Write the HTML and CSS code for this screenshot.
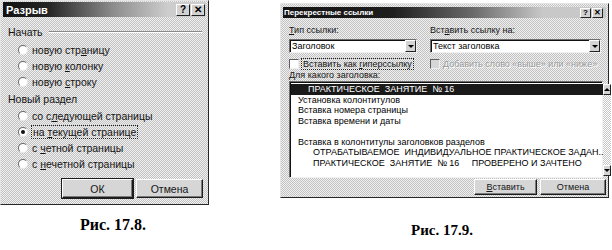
FILE: index.html
```html
<!DOCTYPE html>
<html lang="ru">
<head>
    <meta charset="UTF-8">
    <title>Разрыв и Перекрестные ссылки</title>
    <link rel="stylesheet" href="styles.css">
</head>
<body>
    <div class="figure fig-break">
        <div class="dialog break-dialog">
            <div class="titlebar">
                <span class="title">Разрыв</span>
                <span class="title-btns"><span class="tbtn">?</span><span class="tbtn">✕</span></span>
            </div>

            <div class="group-head"><span>Начать</span><span class="rule"></span></div>
            <div class="radio-list first">
                <div class="radio"><span class="dot"></span><span>новую стр<u>а</u>ницу</span></div>
                <div class="radio"><span class="dot"></span><span>новую <u>к</u>олонку</span></div>
                <div class="radio"><span class="dot"></span><span>новую <u>с</u>троку</span></div>
            </div>

            <div class="group-head second"><span>Новый раздел</span></div>
            <div class="radio-list">
                <div class="radio"><span class="dot"></span><span>со с<u>л</u>едующей страницы</span></div>
                <div class="radio"><span class="dot checked"></span><span class="focus">на <u>т</u>екущей странице</span></div>
                <div class="radio"><span class="dot"></span><span>с <u>ч</u>етной страницы</span></div>
                <div class="radio"><span class="dot"></span><span>с <u>н</u>ечетной страницы</span></div>
            </div>

            <div class="buttons">
                <span class="btn default ok">ОК</span>
                <span class="btn cancel">Отмена</span>
            </div>
        </div>
        <p class="caption">Рис. 17.8.</p>
    </div>

    <div class="figure fig-cross">
        <div class="dialog cross-dialog">
            <div class="titlebar">
                <span class="title">Перекрестные ссылки</span>
                <span class="title-btns"><span class="tbtn">?</span><span class="tbtn">✕</span></span>
            </div>

            <div class="cross-form">
                <div class="field-label"><u>Т</u>ип ссылки:</div>
                <div class="field-label">Вст<u>а</u>вить ссылку на:</div>

                <div class="combo"><span class="combo-text">Заголовок</span><span class="combo-arrow"></span></div>
                <div class="combo"><span class="combo-text">Текст заголовка</span><span class="combo-arrow"></span></div>

                <div class="check"><span class="box"></span><span class="focus">Вставить как <u>г</u>иперссылку</span></div>
                <div class="check disabled"><span class="box"></span><span>Добавить слово «выше» или «ниже»</span></div>
            </div>

            <div class="field-label list-label"><u>Д</u>ля какого заголовка:</div>
            <div class="listbox">
                <div class="list-rows">
                    <div class="row selected">ПРАКТИЧЕСКОЕ  ЗАНЯТИЕ  № 16</div>
                    <div class="row">Установка колонтитулов</div>
                    <div class="row">Вставка номера страницы</div>
                    <div class="row">Вставка времени и даты</div>
                    <div class="row"></div>
                    <div class="row">Вставка в колонтитулы заголовков разделов</div>
                    <div class="row sub">ОТРАБАТЫВАЕМОЕ  ИНДИВИДУАЛЬНОЕ ПРАКТИЧЕСКОЕ ЗАДАН..</div>
                    <div class="row sub">ПРАКТИЧЕСКОЕ  ЗАНЯТИЕ  № 16     ПРОВЕРЕНО И ЗАЧТЕНО</div>
                </div>
                <div class="scrollbar">
                    <span class="sb-btn up"></span>
                    <span class="sb-track"></span>
                    <span class="sb-btn down"></span>
                </div>
            </div>

            <div class="buttons">
                <span class="btn insert"><span><u>В</u>ставить</span></span>
                <span class="btn cancel">Отмена</span>
            </div>
        </div>
        <p class="caption">Рис. 17.9.</p>
    </div>
</body>
</html>
```

FILE: styles.css
```css
body {
    margin: 0;
    background: #fff;
    display: flex;
    align-items: flex-start;
    font-family: "Liberation Sans", Arial, sans-serif;
    color: #151515;
}
.figure {
    flex: none;
}
.fig-break {
    width: 209px;
}
.fig-cross {
    width: 329px;
    margin-left: 71px;
    padding-top: 3px;
}

/* common window look */
.dialog {
    box-sizing: border-box;
    border: 1px solid;
    border-color: #e4e4e4 #262626 #262626 #e4e4e4;
    background: repeating-conic-gradient(#c2c2c2 0 25%, #f0f0f0 0 50%) 0 0 / 2px 2px;
}
.titlebar {
    display: flex;
    align-items: center;
    justify-content: space-between;
    color: #fff;
    font-weight: bold;
}
.title-btns {
    display: flex;
    gap: 1px;
}
.tbtn {
    box-sizing: border-box;
    display: flex;
    align-items: center;
    justify-content: center;
    background: #d2d2d2;
    color: #000;
    border: 1px solid;
    border-color: #fff #222 #222 #fff;
    font-weight: bold;
}
.btn {
    box-sizing: border-box;
    display: flex;
    align-items: center;
    justify-content: center;
    background: #d6d6d6;
    border: 1px solid;
    border-color: #fff #1c1c1c #1c1c1c #fff;
    box-shadow: inset -1px -1px 0 #7a7a7a;
}
.btn.default {
    outline: 1px solid #1c1c1c;
}
.buttons {
    display: flex;
    justify-content: flex-end;
}
.focus {
    outline: 1px dotted #222;
    outline-offset: 0;
    padding: 0 1px;
}
u {
    text-decoration-thickness: 1px;
    text-underline-offset: 1px;
}

/* Разрыв */
.break-dialog {
    height: 205px;
    padding: 1px 2px 0;
    font-size: 10.5px;
}
.break-dialog .titlebar {
    height: 15px;
    padding-left: 3px;
    font-size: 11px;
    background: linear-gradient(to right, #121212 0, #242424 45px, #8c8c8c 110px, #cdcdcd 165px);
}
.break-dialog .title-btns {
    margin-right: 1px;
}
.break-dialog .tbtn {
    width: 14px;
    height: 12px;
    font-size: 10px;
}
.group-head {
    display: flex;
    align-items: center;
    gap: 6px;
    height: 14px;
    margin: 8px 4px 0 5px;
}
.group-head.second {
    margin-top: 2px;
}
.rule {
    flex: 1;
    border-top: 1px solid #8a8a8a;
    border-bottom: 1px solid #fff;
}
.radio-list {
    padding-top: 2px;
}
.radio-list.first {
    padding-top: 3px;
}
.radio {
    display: flex;
    align-items: center;
    height: 16px;
    padding-left: 15px;
}
.dot {
    box-sizing: border-box;
    position: relative;
    width: 10px;
    height: 10px;
    margin-right: 4px;
    border-radius: 50%;
    background: #fff;
    border: 1px solid;
    border-color: #6a6a6a #e8e8e8 #e8e8e8 #6a6a6a;
}
.dot.checked::after {
    content: "";
    position: absolute;
    left: 2px;
    top: 2px;
    width: 4px;
    height: 4px;
    border-radius: 50%;
    background: #111;
}
.break-dialog .buttons {
    margin: 7px 3px 0 0;
    gap: 3px;
}
.break-dialog .btn {
    height: 19px;
}
.break-dialog .ok {
    width: 71px;
}
.break-dialog .cancel {
    width: 67px;
}

/* Перекрестные ссылки */
.cross-dialog {
    height: 195px;
    padding: 3px 2px 0;
    font-size: 9px;
}
.cross-dialog .titlebar {
    height: 11px;
    padding-left: 1px;
    font-size: 8px;
    background: linear-gradient(to right, #141414 0, #1e1e1e 110px, #6a6a6a 190px, #c8c8c8 260px);
}
.cross-dialog .title-btns {
    margin-right: 3px;
}
.cross-dialog .tbtn {
    width: 11px;
    height: 10px;
    font-size: 8px;
}
.cross-form {
    display: grid;
    grid-template-columns: 128px 171px;
    column-gap: 13px;
    margin: 7px 0 0 6px;
}
.field-label {
    height: 10px;
    line-height: 10px;
}
.list-label {
    margin-left: 6px;
}
.combo {
    box-sizing: border-box;
    display: flex;
    align-items: center;
    height: 14px;
    margin-top: 4px;
    background: #fff;
    border: 1px solid;
    border-color: #6e6e6e #f0f0f0 #f0f0f0 #6e6e6e;
    box-shadow: inset 1px 1px 0 #111;
}
.combo-text {
    flex: 1;
    padding-left: 2px;
    color: #000;
}
.combo-arrow {
    box-sizing: border-box;
    display: flex;
    align-items: center;
    justify-content: center;
    width: 11px;
    height: 12px;
    background: #d4d4d4;
    border: 1px solid;
    border-color: #fff #222 #222 #fff;
}
.combo-arrow::after {
    content: "";
    border-left: 3px solid transparent;
    border-right: 3px solid transparent;
    border-top: 3px solid #000;
}
.check {
    display: flex;
    align-items: center;
    height: 12px;
    margin-top: 5px;
}
.box {
    box-sizing: border-box;
    width: 10px;
    height: 10px;
    margin-right: 3px;
    background: #fff;
    border: 1px solid;
    border-color: #5e5e5e #eee #eee #5e5e5e;
}
.check.disabled {
    color: #9a9a9a;
    text-shadow: 1px 1px 0 #fff;
}
.check.disabled .box {
    background: #d6d6d6;
}
.listbox {
    box-sizing: border-box;
    display: flex;
    width: 314px;
    height: 97px;
    margin: 1px 0 0 6px;
    background: #fff;
    border: 1px solid;
    border-color: #6e6e6e #f0f0f0 #f0f0f0 #6e6e6e;
    box-shadow: inset 1px 1px 0 #111;
}
.list-rows {
    flex: 1;
    padding-top: 2px;
    padding-left: 1px;
    color: #000;
}
.row {
    height: 10.5px;
    line-height: 10.5px;
    padding-left: 7px;
    white-space: pre;
}
.row.selected {
    background: #1a1a1a;
    color: #fff;
    padding-left: 17px;
}
.row.sub {
    padding-left: 22px;
}
.scrollbar {
    display: flex;
    flex-direction: column;
    width: 11px;
    padding: 2px 1px 1px 0;
}
.sb-track {
    flex: 1;
    background: repeating-conic-gradient(#c6c6c6 0 25%, #fff 0 50%) 0 0 / 2px 2px;
}
.sb-btn {
    box-sizing: border-box;
    display: flex;
    align-items: center;
    justify-content: center;
    height: 11px;
    background: #d4d4d4;
    border: 1px solid;
    border-color: #fff #222 #222 #fff;
}
.sb-btn.up::after {
    content: "";
    border-left: 3px solid transparent;
    border-right: 3px solid transparent;
    border-bottom: 3px solid #000;
}
.sb-btn.down::after {
    content: "";
    border-left: 3px solid transparent;
    border-right: 3px solid transparent;
    border-top: 3px solid #000;
}
.cross-dialog .buttons {
    margin: 1px 0 0;
    gap: 3px;
}
.cross-dialog .btn {
    height: 16px;
}
.cross-dialog .insert {
    width: 63px;
}
.cross-dialog .cancel {
    width: 66px;
}

/* подписи */
.caption {
    margin: 0;
    font-family: "Liberation Serif", "DejaVu Serif", serif;
    font-weight: bold;
    color: #000;
    text-align: center;
}
.fig-break .caption {
    margin-top: 12px;
    padding-left: 17px;
    font-size: 16px;
    line-height: 16px;
}
.fig-cross .caption {
    margin-top: 25px;
    padding-right: 5px;
    font-size: 15px;
    line-height: 15px;
}
```
